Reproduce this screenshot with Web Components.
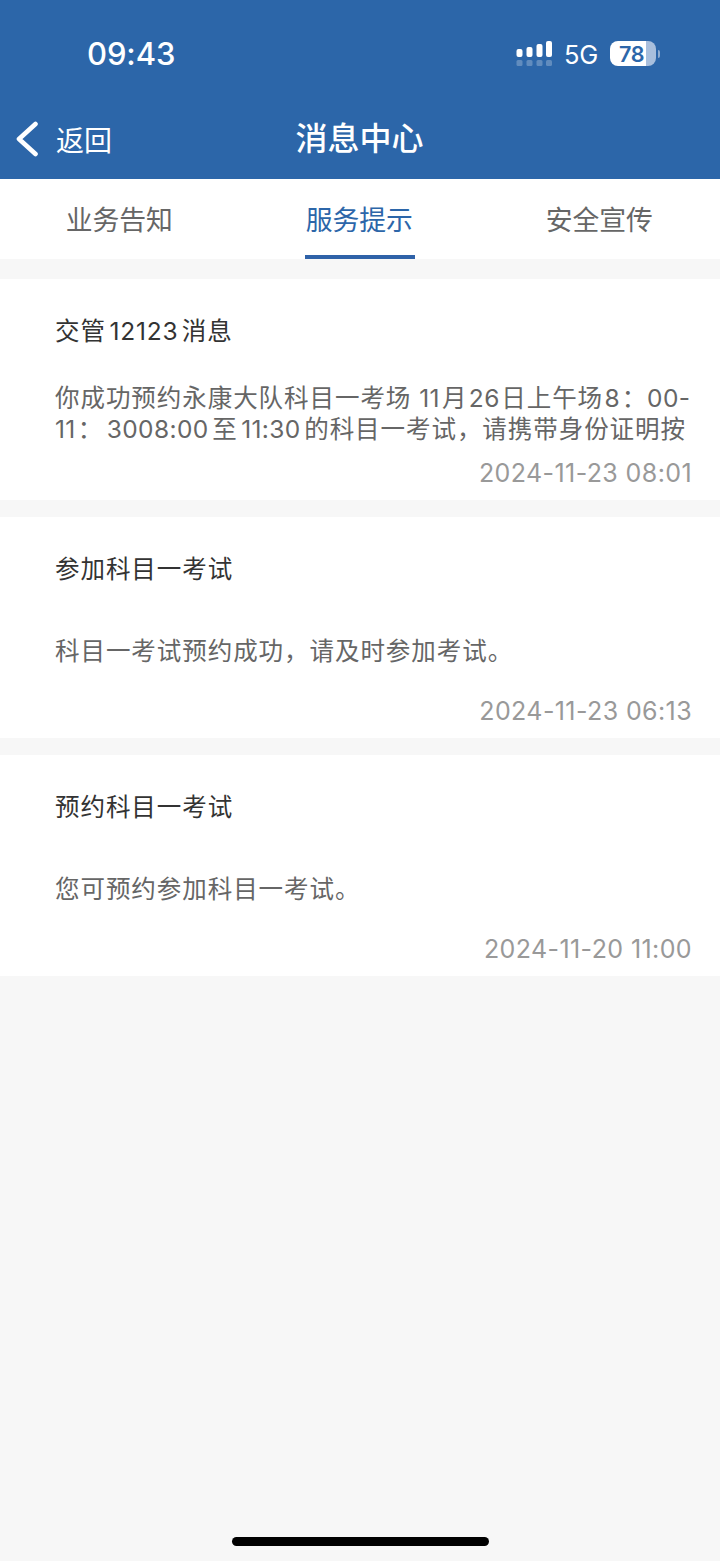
<!DOCTYPE html>
<html lang="zh-CN">
<head>
<meta charset="UTF-8">
<meta name="viewport" content="width=device-width, initial-scale=1">
<title>消息中心</title>
<style>
    body {
        margin: 0;
        background-color: #f7f7f7;
        font-family: Inter, 'Noto Sans CJK SC', sans-serif;
    }
</style>
</head>
<body>
<message-app>
    <status-bar time="09:43" network="5G" battery="78"></status-bar>
    <nav-bar back="返回">消息中心</nav-bar>
    <tab-bar>
        <tab-item>业务告知</tab-item>
        <tab-item active>服务提示</tab-item>
        <tab-item>安全宣传</tab-item>
    </tab-bar>
    <message-card date="2024-11-23 08:01">
        <span slot="title">交管<text-run wide>12123</text-run>消息</span>
        <text-line>你成功预约永康大队科目一考场 <text-run flush>11</text-run>月<text-run>26</text-run>日上午场<text-run>8</text-run>：<text-run flush>00-</text-run></text-line>
        <text-line><text-run flush>11</text-run>：<text-run wide>3008:00</text-run>至<text-run wide>11:30</text-run>的科目一考试，请携带身份证明按</text-line>
    </message-card>
    <message-card date="2024-11-23 06:13">
        <span slot="title">参加科目一考试</span>
        <text-line>科目一考试预约成功，请及时参加考试。</text-line>
    </message-card>
    <message-card date="2024-11-20 11:00">
        <span slot="title">预约科目一考试</span>
        <text-line>您可预约参加科目一考试。</text-line>
    </message-card>
    <home-indicator slot="footer"></home-indicator>
</message-app>

<script>
class MessageApp extends HTMLElement {
    constructor() {
        super();
        this.attachShadow({ mode: 'open' });
        this.shadowRoot.innerHTML = `
            <style>
                :host {
                    display: flex;
                    flex-direction: column;
                    height: 1561px;
                    overflow: hidden;
                }
                main {
                    flex: 1;
                }
            </style>
            <main><slot></slot></main>
            <slot name="footer"></slot>
        `;
    }
}

class StatusBar extends HTMLElement {
    constructor() {
        super();
        this.attachShadow({ mode: 'open' });
    }

    connectedCallback() {
        this.shadowRoot.innerHTML = `
            <style>
                :host {
                    display: flex;
                    align-items: center;
                    justify-content: space-between;
                    box-sizing: border-box;
                    height: 98px;
                    padding: 9px 60px 0 87px;
                    background-color: #2c66a9;
                    color: #fff;
                }
                .time {
                    font-size: 31px;
                    font-weight: 500;
                    letter-spacing: -0.1px;
                }
                .right {
                    display: flex;
                    align-items: center;
                }
                .network {
                    margin: 2px 12px 0 11px;
                    font-size: 25.5px;
                    letter-spacing: -0.3px;
                }
                .battery {
                    display: flex;
                    align-items: center;
                    gap: 2px;
                }
                .level {
                    width: 46px;
                    height: 25px;
                    border-radius: 8px;
                    background: linear-gradient(to right, #fff 36px, #a8bfdd 36px);
                    color: #2c66a9;
                    font-size: 21.5px;
                    font-weight: 600;
                    line-height: 26px;
                    letter-spacing: -0.3px;
                    text-indent: 9px;
                }
                .cap {
                    width: 2px;
                    height: 8px;
                    border-radius: 0 2px 2px 0;
                    background-color: #8eacd0;
                }
            </style>
            <span class="time">${this.getAttribute('time')}</span>
            <div class="right">
                <svg width="37" height="26" viewBox="0 0 37 26" fill="#fff">
                    <rect x="0.5" y="8" width="6" height="8" rx="2"/>
                    <rect x="10.5" y="6" width="6" height="10" rx="2"/>
                    <rect x="20.5" y="3" width="6" height="13" rx="2"/>
                    <rect x="30" y="0" width="6" height="16" rx="2"/>
                    <g opacity="0.25">
                        <rect x="0.5" y="19" width="6" height="6" rx="1.5"/>
                        <rect x="10.5" y="19" width="6" height="6" rx="1.5"/>
                        <rect x="20.5" y="19" width="6" height="6" rx="1.5"/>
                        <rect x="30" y="19" width="6" height="6" rx="1.5"/>
                    </g>
                </svg>
                <span class="network">${this.getAttribute('network')}</span>
                <div class="battery">
                    <div class="level">${this.getAttribute('battery')}</div>
                    <div class="cap"></div>
                </div>
            </div>
        `;
    }
}

class NavBar extends HTMLElement {
    constructor() {
        super();
        this.attachShadow({ mode: 'open' });
    }

    connectedCallback() {
        this.shadowRoot.innerHTML = `
            <style>
                :host {
                    display: grid;
                    grid-template-columns: 1fr auto 1fr;
                    align-items: center;
                    box-sizing: border-box;
                    height: 81px;
                    padding: 0 17px 0 16px;
                    background-color: #2c66a9;
                    color: #fff;
                }
                .back {
                    display: flex;
                    align-items: center;
                    gap: 18px;
                    font-size: 28px;
                }
                .title {
                    padding-bottom: 5px;
                    font-size: 32px;
                    font-weight: 500;
                }
            </style>
            <div class="back">
                <svg width="22" height="36" viewBox="0 0 22 36" fill="none" stroke="#fff" stroke-width="4.6" stroke-linecap="round" stroke-linejoin="round">
                    <path d="M19.5 3 L3 18 L19.5 33"/>
                </svg>
                <span>${this.getAttribute('back')}</span>
            </div>
            <div class="title"><slot></slot></div>
        `;
    }
}

class TabBar extends HTMLElement {
    constructor() {
        super();
        this.attachShadow({ mode: 'open' });
        this.shadowRoot.innerHTML = `
            <style>
                :host {
                    display: grid;
                    grid-template-columns: repeat(3, 1fr);
                    height: 80px;
                    margin-bottom: 20px;
                    background-color: #fff;
                }
            </style>
            <slot></slot>
        `;
    }
}

class TabItem extends HTMLElement {
    constructor() {
        super();
        this.attachShadow({ mode: 'open' });
        this.shadowRoot.innerHTML = `
            <style>
                :host {
                    display: flex;
                    justify-content: center;
                    color: #666;
                    font-size: 26.8px;
                    line-height: 83px;
                }
                span {
                    box-sizing: border-box;
                    height: 80px;
                    padding: 0 2px 0 0.5px;
                    border-bottom: 4px solid transparent;
                }
                :host([active]) {
                    color: #2c66a9;
                }
                :host([active]) span {
                    border-color: #2f62a8;
                }
            </style>
            <span><slot></slot></span>
        `;
    }
}

class MessageCard extends HTMLElement {
    constructor() {
        super();
        this.attachShadow({ mode: 'open' });
    }

    connectedCallback() {
        this.shadowRoot.innerHTML = `
            <style>
                :host {
                    display: flex;
                    flex-direction: column;
                    box-sizing: border-box;
                    height: 221px;
                    margin-bottom: 17px;
                    padding: 33px 28px 8px 55px;
                    background-color: #fff;
                    font-size: 24.5px;
                    letter-spacing: 0.95px;
                }
                .title {
                    color: #333;
                    line-height: 38px;
                    --run-spacing: 0.8px;
                }
                .content {
                    flex: 1;
                    display: flex;
                    flex-direction: column;
                    justify-content: center;
                    color: #666;
                    line-height: 31px;
                    padding-top: 23px;
                }
                .date {
                    color: #999;
                    font-size: 25px;
                    line-height: 38px;
                    letter-spacing: 0.4px;
                    text-align: right;
                }
            </style>
            <div class="title"><slot name="title"></slot></div>
            <div class="content"><slot></slot></div>
            <div class="date">${this.getAttribute('date')}</div>
        `;
    }
}

// one unbroken line of body text
class TextLine extends HTMLElement {
    constructor() {
        super();
        this.attachShadow({ mode: 'open' });
        this.shadowRoot.innerHTML = `
            <style>
                :host {
                    display: block;
                    white-space: nowrap;
                }
            </style>
            <slot></slot>
        `;
    }
}

// latin digits inside chinese text, no whitespace around the slot or it shows up in the line
class TextRun extends HTMLElement {
    constructor() {
        super();
        this.attachShadow({ mode: 'open' });
        this.shadowRoot.innerHTML = `<style>
                :host {
                    display: inline;
                    margin: 0 1.5px;
                    letter-spacing: var(--run-spacing, 0.4px);
                }
                :host([wide]) {
                    margin: 0 3.5px;
                }
                :host([flush]) {
                    margin: 0 2px 0 0;
                }
            </style><slot></slot>`;
    }
}

class HomeIndicator extends HTMLElement {
    constructor() {
        super();
        this.attachShadow({ mode: 'open' });
        this.shadowRoot.innerHTML = `
            <style>
                :host {
                    display: flex;
                    justify-content: center;
                    padding-bottom: 15px;
                }
                div {
                    width: 257px;
                    height: 9px;
                    border-radius: 5px;
                    background-color: #000;
                }
            </style>
            <div></div>
        `;
    }
}

customElements.define('message-app', MessageApp);
customElements.define('status-bar', StatusBar);
customElements.define('nav-bar', NavBar);
customElements.define('tab-bar', TabBar);
customElements.define('tab-item', TabItem);
customElements.define('message-card', MessageCard);
customElements.define('text-line', TextLine);
customElements.define('text-run', TextRun);
customElements.define('home-indicator', HomeIndicator);
</script>
</body>
</html>
